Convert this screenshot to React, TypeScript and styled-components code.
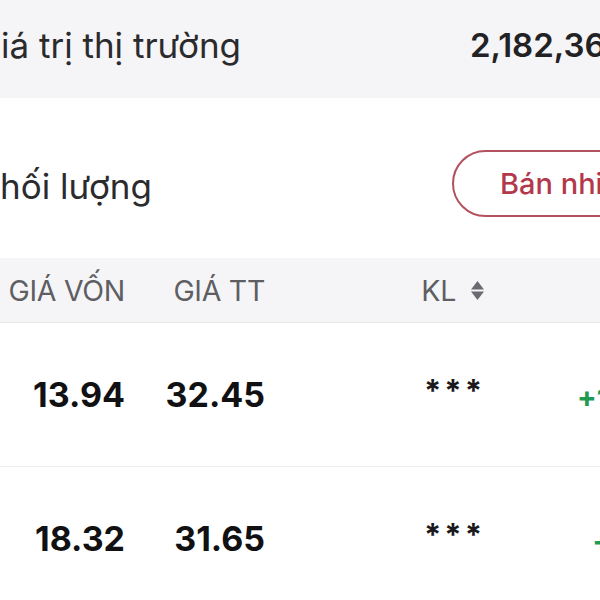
import React from "react";
import styled, { createGlobalStyle } from "styled-components";

type Holding = {
  cost: string;
  price: string;
  volume: string;
  change: string;
};

const holdings: Holding[] = [
  { cost: "13.94", price: "32.45", volume: "***", change: "+132.78%" },
  { cost: "18.32", price: "31.65", volume: "***", change: "+72.76%" },
];

export default function App() {
  return (
    <>
      <GlobalStyle />
      <Screen>
        <SummaryBar>
          <SummaryLabel>iá trị thị trường</SummaryLabel>
          <SummaryValue>2,182,365</SummaryValue>
        </SummaryBar>

        <ActionRow>
          <ActionLabel>hối lượng</ActionLabel>
          <OutlineButton>Bán nhiều mã</OutlineButton>
        </ActionRow>

        <TableHead>
          <HeadCell>GIÁ VỐN</HeadCell>
          <HeadCell>GIÁ TT</HeadCell>
          <HeadCell>
            KL
            <SortIcon width="15" height="21" viewBox="0 0 15 21">
              <path d="M1 9.5 L7.5 1 L14 9.5 Z" />
              <path d="M1 11.5 L14 11.5 L7.5 20 Z" />
            </SortIcon>
          </HeadCell>
          <HeadCell>LÃI/LỖ</HeadCell>
        </TableHead>

        {holdings.map((h, i) => (
          <Row key={i}>
            <NumCell>{h.cost}</NumCell>
            <NumCell>{h.price}</NumCell>
            <Masked>{h.volume}</Masked>
            <ChangeCell>{h.change}</ChangeCell>
          </Row>
        ))}
      </Screen>
    </>
  );
}

const GlobalStyle = createGlobalStyle`
  html, body {
    margin: 0;
    padding: 0;
    background: #ffffff;
    overflow: hidden;
  }
  * {
    box-sizing: border-box;
  }
`;

const Screen = styled.div`
  width: 600px;
  height: 600px;
  overflow: hidden;
  background: #ffffff;
  font-family: Inter, "Noto Sans", sans-serif;
  color: #1c1c1e;
`;

const SummaryBar = styled.div`
  height: 98px;
  display: flex;
  align-items: center;
  background: #f5f5f7;
  white-space: nowrap;
`;

const SummaryLabel = styled.div`
  flex: none;
  width: 470px;
  padding-left: 1px;
  padding-bottom: 8px;
  font-size: 35px;
  color: #2b2b2e;
`;

const SummaryValue = styled.div`
  flex: none;
  padding-bottom: 8px;
  font-size: 33px;
  font-weight: 600;
  color: #222224;
`;

const ActionRow = styled.div`
  display: flex;
  align-items: center;
  padding: 52px 0 40px;
  white-space: nowrap;
`;

const ActionLabel = styled.div`
  flex: none;
  width: 452px;
  padding-top: 4px;
  font-size: 35px;
  color: #2b2b2e;
`;

const OutlineButton = styled.button`
  flex: none;
  height: 67px;
  padding: 0 40px 0 46px;
  border: 2px solid #b3525f;
  border-radius: 34px;
  background: #ffffff;
  font-family: Inter, "Noto Sans", sans-serif;
  font-size: 29px;
  font-weight: 500;
  color: #b3384b;
  white-space: nowrap;
`;

const columns = "125px 140px 220px 235px";

const TableHead = styled.div`
  display: grid;
  grid-template-columns: ${columns};
  align-items: center;
  width: 720px;
  height: 65px;
  margin-top: 1px;
  background: #f5f5f7;
  border-bottom: 1px solid #e9e9ec;
  white-space: nowrap;
`;

const HeadCell = styled.div`
  display: flex;
  align-items: center;
  justify-content: flex-end;
  gap: 14px;
  font-size: 28.5px;
  letter-spacing: -0.3px;
  color: #5e5e63;
`;

const SortIcon = styled.svg`
  fill: #6a6a70;
  flex: none;
`;

const Row = styled.div`
  display: grid;
  grid-template-columns: ${columns};
  align-items: center;
  width: 720px;
  height: 144px;
  border-bottom: 1px solid #ececef;
  white-space: nowrap;
`;

const NumCell = styled.div`
  text-align: right;
  font-size: 34px;
  font-weight: 700;
  color: #111113;
`;

const Masked = styled.div`
  text-align: right;
  padding-bottom: 8px;
  font-size: 31px;
  font-weight: 700;
  letter-spacing: 3px;
  color: #1a1a1c;
`;

const ChangeCell = styled.div`
  text-align: right;
  padding-top: 8px;
  font-size: 29px;
  font-weight: 700;
  color: #1f9a52;
`;
